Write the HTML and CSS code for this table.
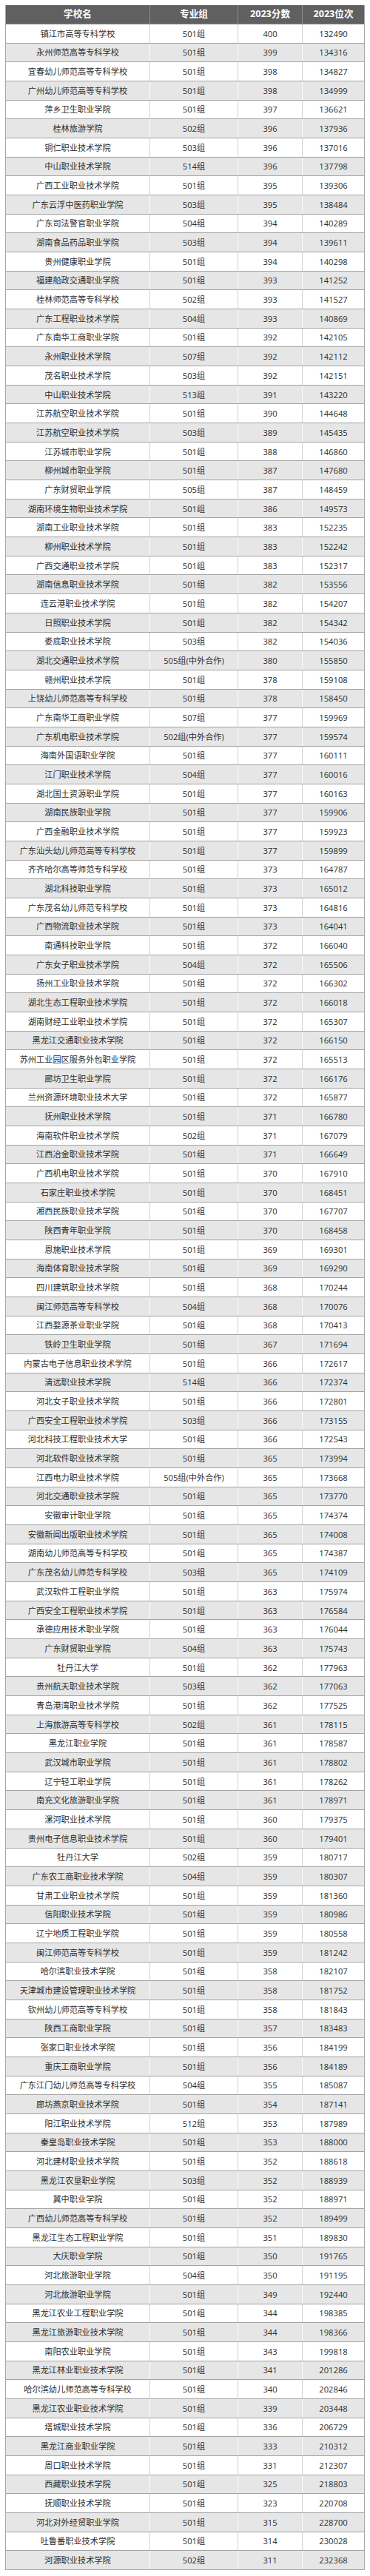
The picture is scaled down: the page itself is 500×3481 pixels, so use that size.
FILE: index.html
```html
<!DOCTYPE html>
<html lang="zh-CN">
<head>
<meta charset="utf-8">
<title>2023分数位次</title>
<link rel="stylesheet" href="styles.css">
</head>
<body>
<div class="table">
<div class="row head"><div class="cell">学校名</div><div class="cell">专业组</div><div class="cell">2023分数</div><div class="cell">2023位次</div></div>
<div class="row"><div class="cell">镇江市高等专科学校</div><div class="cell">501组</div><div class="cell">400</div><div class="cell">132490</div></div>
<div class="row"><div class="cell">永州师范高等专科学校</div><div class="cell">501组</div><div class="cell">399</div><div class="cell">134316</div></div>
<div class="row"><div class="cell">宜春幼儿师范高等专科学校</div><div class="cell">501组</div><div class="cell">398</div><div class="cell">134827</div></div>
<div class="row"><div class="cell">广州幼儿师范高等专科学校</div><div class="cell">501组</div><div class="cell">398</div><div class="cell">134999</div></div>
<div class="row"><div class="cell">萍乡卫生职业学院</div><div class="cell">501组</div><div class="cell">397</div><div class="cell">136621</div></div>
<div class="row"><div class="cell">桂林旅游学院</div><div class="cell">502组</div><div class="cell">396</div><div class="cell">137936</div></div>
<div class="row"><div class="cell">铜仁职业技术学院</div><div class="cell">503组</div><div class="cell">396</div><div class="cell">137016</div></div>
<div class="row"><div class="cell">中山职业技术学院</div><div class="cell">514组</div><div class="cell">396</div><div class="cell">137798</div></div>
<div class="row"><div class="cell">广西工业职业技术学院</div><div class="cell">501组</div><div class="cell">395</div><div class="cell">139306</div></div>
<div class="row"><div class="cell">广东云浮中医药职业学院</div><div class="cell">503组</div><div class="cell">395</div><div class="cell">138484</div></div>
<div class="row"><div class="cell">广东司法警官职业学院</div><div class="cell">504组</div><div class="cell">394</div><div class="cell">140289</div></div>
<div class="row"><div class="cell">湖南食品药品职业学院</div><div class="cell">503组</div><div class="cell">394</div><div class="cell">139611</div></div>
<div class="row"><div class="cell">贵州健康职业学院</div><div class="cell">501组</div><div class="cell">394</div><div class="cell">140298</div></div>
<div class="row"><div class="cell">福建船政交通职业学院</div><div class="cell">501组</div><div class="cell">393</div><div class="cell">141252</div></div>
<div class="row"><div class="cell">桂林师范高等专科学校</div><div class="cell">502组</div><div class="cell">393</div><div class="cell">141527</div></div>
<div class="row"><div class="cell">广东工程职业技术学院</div><div class="cell">504组</div><div class="cell">393</div><div class="cell">140869</div></div>
<div class="row"><div class="cell">广东南华工商职业学院</div><div class="cell">501组</div><div class="cell">392</div><div class="cell">142105</div></div>
<div class="row"><div class="cell">永州职业技术学院</div><div class="cell">507组</div><div class="cell">392</div><div class="cell">142112</div></div>
<div class="row"><div class="cell">茂名职业技术学院</div><div class="cell">503组</div><div class="cell">392</div><div class="cell">142151</div></div>
<div class="row"><div class="cell">中山职业技术学院</div><div class="cell">513组</div><div class="cell">391</div><div class="cell">143220</div></div>
<div class="row"><div class="cell">江苏航空职业技术学院</div><div class="cell">501组</div><div class="cell">390</div><div class="cell">144648</div></div>
<div class="row"><div class="cell">江苏航空职业技术学院</div><div class="cell">503组</div><div class="cell">389</div><div class="cell">145435</div></div>
<div class="row"><div class="cell">江苏城市职业学院</div><div class="cell">501组</div><div class="cell">388</div><div class="cell">146860</div></div>
<div class="row"><div class="cell">柳州城市职业学院</div><div class="cell">501组</div><div class="cell">387</div><div class="cell">147680</div></div>
<div class="row"><div class="cell">广东财贸职业学院</div><div class="cell">505组</div><div class="cell">387</div><div class="cell">148459</div></div>
<div class="row"><div class="cell">湖南环境生物职业技术学院</div><div class="cell">501组</div><div class="cell">386</div><div class="cell">149573</div></div>
<div class="row"><div class="cell">湖南工业职业技术学院</div><div class="cell">501组</div><div class="cell">383</div><div class="cell">152235</div></div>
<div class="row"><div class="cell">柳州职业技术学院</div><div class="cell">501组</div><div class="cell">383</div><div class="cell">152242</div></div>
<div class="row"><div class="cell">广西交通职业技术学院</div><div class="cell">501组</div><div class="cell">383</div><div class="cell">152317</div></div>
<div class="row"><div class="cell">湖南信息职业技术学院</div><div class="cell">501组</div><div class="cell">382</div><div class="cell">153556</div></div>
<div class="row"><div class="cell">连云港职业技术学院</div><div class="cell">501组</div><div class="cell">382</div><div class="cell">154207</div></div>
<div class="row"><div class="cell">日照职业技术学院</div><div class="cell">501组</div><div class="cell">382</div><div class="cell">154342</div></div>
<div class="row"><div class="cell">娄底职业技术学院</div><div class="cell">503组</div><div class="cell">382</div><div class="cell">154036</div></div>
<div class="row"><div class="cell">湖北交通职业技术学院</div><div class="cell">505组(中外合作)</div><div class="cell">380</div><div class="cell">155850</div></div>
<div class="row"><div class="cell">赣州职业技术学院</div><div class="cell">501组</div><div class="cell">378</div><div class="cell">159108</div></div>
<div class="row"><div class="cell">上饶幼儿师范高等专科学校</div><div class="cell">501组</div><div class="cell">378</div><div class="cell">158450</div></div>
<div class="row"><div class="cell">广东南华工商职业学院</div><div class="cell">507组</div><div class="cell">377</div><div class="cell">159969</div></div>
<div class="row"><div class="cell">广东机电职业技术学院</div><div class="cell">502组(中外合作)</div><div class="cell">377</div><div class="cell">159574</div></div>
<div class="row"><div class="cell">海南外国语职业学院</div><div class="cell">501组</div><div class="cell">377</div><div class="cell">160111</div></div>
<div class="row"><div class="cell">江门职业技术学院</div><div class="cell">504组</div><div class="cell">377</div><div class="cell">160016</div></div>
<div class="row"><div class="cell">湖北国土资源职业学院</div><div class="cell">501组</div><div class="cell">377</div><div class="cell">160163</div></div>
<div class="row"><div class="cell">湖南民族职业学院</div><div class="cell">501组</div><div class="cell">377</div><div class="cell">159906</div></div>
<div class="row"><div class="cell">广西金融职业技术学院</div><div class="cell">501组</div><div class="cell">377</div><div class="cell">159923</div></div>
<div class="row"><div class="cell">广东汕头幼儿师范高等专科学校</div><div class="cell">501组</div><div class="cell">377</div><div class="cell">159899</div></div>
<div class="row"><div class="cell">齐齐哈尔高等师范专科学校</div><div class="cell">501组</div><div class="cell">373</div><div class="cell">164787</div></div>
<div class="row"><div class="cell">湖北科技职业学院</div><div class="cell">501组</div><div class="cell">373</div><div class="cell">165012</div></div>
<div class="row"><div class="cell">广东茂名幼儿师范专科学校</div><div class="cell">501组</div><div class="cell">373</div><div class="cell">164816</div></div>
<div class="row"><div class="cell">广西物流职业技术学院</div><div class="cell">501组</div><div class="cell">373</div><div class="cell">164041</div></div>
<div class="row"><div class="cell">南通科技职业学院</div><div class="cell">501组</div><div class="cell">372</div><div class="cell">166040</div></div>
<div class="row"><div class="cell">广东女子职业技术学院</div><div class="cell">504组</div><div class="cell">372</div><div class="cell">165506</div></div>
<div class="row"><div class="cell">扬州工业职业技术学院</div><div class="cell">501组</div><div class="cell">372</div><div class="cell">166302</div></div>
<div class="row"><div class="cell">湖北生态工程职业技术学院</div><div class="cell">501组</div><div class="cell">372</div><div class="cell">166018</div></div>
<div class="row"><div class="cell">湖南财经工业职业技术学院</div><div class="cell">501组</div><div class="cell">372</div><div class="cell">165307</div></div>
<div class="row"><div class="cell">黑龙江交通职业技术学院</div><div class="cell">501组</div><div class="cell">372</div><div class="cell">166150</div></div>
<div class="row"><div class="cell">苏州工业园区服务外包职业学院</div><div class="cell">501组</div><div class="cell">372</div><div class="cell">165513</div></div>
<div class="row"><div class="cell">廊坊卫生职业学院</div><div class="cell">501组</div><div class="cell">372</div><div class="cell">166176</div></div>
<div class="row"><div class="cell">兰州资源环境职业技术大学</div><div class="cell">501组</div><div class="cell">372</div><div class="cell">165877</div></div>
<div class="row"><div class="cell">抚州职业技术学院</div><div class="cell">501组</div><div class="cell">371</div><div class="cell">166780</div></div>
<div class="row"><div class="cell">海南软件职业技术学院</div><div class="cell">502组</div><div class="cell">371</div><div class="cell">167079</div></div>
<div class="row"><div class="cell">江西冶金职业技术学院</div><div class="cell">501组</div><div class="cell">371</div><div class="cell">166649</div></div>
<div class="row"><div class="cell">广西机电职业技术学院</div><div class="cell">501组</div><div class="cell">370</div><div class="cell">167910</div></div>
<div class="row"><div class="cell">石家庄职业技术学院</div><div class="cell">501组</div><div class="cell">370</div><div class="cell">168451</div></div>
<div class="row"><div class="cell">湘西民族职业技术学院</div><div class="cell">501组</div><div class="cell">370</div><div class="cell">167707</div></div>
<div class="row"><div class="cell">陕西青年职业学院</div><div class="cell">501组</div><div class="cell">370</div><div class="cell">168458</div></div>
<div class="row"><div class="cell">恩施职业技术学院</div><div class="cell">501组</div><div class="cell">369</div><div class="cell">169301</div></div>
<div class="row"><div class="cell">海南体育职业技术学院</div><div class="cell">501组</div><div class="cell">369</div><div class="cell">169290</div></div>
<div class="row"><div class="cell">四川建筑职业技术学院</div><div class="cell">501组</div><div class="cell">368</div><div class="cell">170244</div></div>
<div class="row"><div class="cell">闽江师范高等专科学校</div><div class="cell">504组</div><div class="cell">368</div><div class="cell">170076</div></div>
<div class="row"><div class="cell">江西婺源茶业职业学院</div><div class="cell">501组</div><div class="cell">368</div><div class="cell">170413</div></div>
<div class="row"><div class="cell">铁岭卫生职业学院</div><div class="cell">501组</div><div class="cell">367</div><div class="cell">171694</div></div>
<div class="row"><div class="cell">内蒙古电子信息职业技术学院</div><div class="cell">501组</div><div class="cell">366</div><div class="cell">172617</div></div>
<div class="row"><div class="cell">清远职业技术学院</div><div class="cell">514组</div><div class="cell">366</div><div class="cell">172374</div></div>
<div class="row"><div class="cell">河北女子职业技术学院</div><div class="cell">501组</div><div class="cell">366</div><div class="cell">172801</div></div>
<div class="row"><div class="cell">广西安全工程职业技术学院</div><div class="cell">503组</div><div class="cell">366</div><div class="cell">173155</div></div>
<div class="row"><div class="cell">河北科技工程职业技术大学</div><div class="cell">501组</div><div class="cell">366</div><div class="cell">172543</div></div>
<div class="row"><div class="cell">河北软件职业技术学院</div><div class="cell">501组</div><div class="cell">365</div><div class="cell">173994</div></div>
<div class="row"><div class="cell">江西电力职业技术学院</div><div class="cell">505组(中外合作)</div><div class="cell">365</div><div class="cell">173668</div></div>
<div class="row"><div class="cell">河北交通职业技术学院</div><div class="cell">501组</div><div class="cell">365</div><div class="cell">173770</div></div>
<div class="row"><div class="cell">安徽审计职业学院</div><div class="cell">501组</div><div class="cell">365</div><div class="cell">174374</div></div>
<div class="row"><div class="cell">安徽新闻出版职业技术学院</div><div class="cell">501组</div><div class="cell">365</div><div class="cell">174008</div></div>
<div class="row"><div class="cell">湖南幼儿师范高等专科学校</div><div class="cell">501组</div><div class="cell">365</div><div class="cell">174387</div></div>
<div class="row"><div class="cell">广东茂名幼儿师范专科学校</div><div class="cell">503组</div><div class="cell">365</div><div class="cell">174109</div></div>
<div class="row"><div class="cell">武汉软件工程职业学院</div><div class="cell">501组</div><div class="cell">363</div><div class="cell">175974</div></div>
<div class="row"><div class="cell">广西安全工程职业技术学院</div><div class="cell">501组</div><div class="cell">363</div><div class="cell">176584</div></div>
<div class="row"><div class="cell">承德应用技术职业学院</div><div class="cell">501组</div><div class="cell">363</div><div class="cell">176044</div></div>
<div class="row"><div class="cell">广东财贸职业学院</div><div class="cell">504组</div><div class="cell">363</div><div class="cell">175743</div></div>
<div class="row"><div class="cell">牡丹江大学</div><div class="cell">501组</div><div class="cell">362</div><div class="cell">177963</div></div>
<div class="row"><div class="cell">贵州航天职业技术学院</div><div class="cell">503组</div><div class="cell">362</div><div class="cell">177063</div></div>
<div class="row"><div class="cell">青岛港湾职业技术学院</div><div class="cell">501组</div><div class="cell">362</div><div class="cell">177525</div></div>
<div class="row"><div class="cell">上海旅游高等专科学校</div><div class="cell">502组</div><div class="cell">361</div><div class="cell">178115</div></div>
<div class="row"><div class="cell">黑龙江职业学院</div><div class="cell">501组</div><div class="cell">361</div><div class="cell">178587</div></div>
<div class="row"><div class="cell">武汉城市职业学院</div><div class="cell">501组</div><div class="cell">361</div><div class="cell">178802</div></div>
<div class="row"><div class="cell">辽宁轻工职业学院</div><div class="cell">501组</div><div class="cell">361</div><div class="cell">178262</div></div>
<div class="row"><div class="cell">南充文化旅游职业学院</div><div class="cell">501组</div><div class="cell">361</div><div class="cell">178971</div></div>
<div class="row"><div class="cell">漯河职业技术学院</div><div class="cell">501组</div><div class="cell">360</div><div class="cell">179375</div></div>
<div class="row"><div class="cell">贵州电子信息职业技术学院</div><div class="cell">501组</div><div class="cell">360</div><div class="cell">179401</div></div>
<div class="row"><div class="cell">牡丹江大学</div><div class="cell">502组</div><div class="cell">359</div><div class="cell">180717</div></div>
<div class="row"><div class="cell">广东农工商职业技术学院</div><div class="cell">504组</div><div class="cell">359</div><div class="cell">180307</div></div>
<div class="row"><div class="cell">甘肃工业职业技术学院</div><div class="cell">501组</div><div class="cell">359</div><div class="cell">181360</div></div>
<div class="row"><div class="cell">信阳职业技术学院</div><div class="cell">501组</div><div class="cell">359</div><div class="cell">180986</div></div>
<div class="row"><div class="cell">辽宁地质工程职业学院</div><div class="cell">501组</div><div class="cell">359</div><div class="cell">180558</div></div>
<div class="row"><div class="cell">闽江师范高等专科学校</div><div class="cell">501组</div><div class="cell">359</div><div class="cell">181242</div></div>
<div class="row"><div class="cell">哈尔滨职业技术学院</div><div class="cell">501组</div><div class="cell">358</div><div class="cell">182107</div></div>
<div class="row"><div class="cell">天津城市建设管理职业技术学院</div><div class="cell">501组</div><div class="cell">358</div><div class="cell">181752</div></div>
<div class="row"><div class="cell">钦州幼儿师范高等专科学校</div><div class="cell">501组</div><div class="cell">358</div><div class="cell">181843</div></div>
<div class="row"><div class="cell">陕西工商职业学院</div><div class="cell">501组</div><div class="cell">357</div><div class="cell">183483</div></div>
<div class="row"><div class="cell">张家口职业技术学院</div><div class="cell">501组</div><div class="cell">356</div><div class="cell">184199</div></div>
<div class="row"><div class="cell">重庆工商职业学院</div><div class="cell">501组</div><div class="cell">356</div><div class="cell">184189</div></div>
<div class="row"><div class="cell">广东江门幼儿师范高等专科学校</div><div class="cell">504组</div><div class="cell">355</div><div class="cell">185087</div></div>
<div class="row"><div class="cell">廊坊燕京职业技术学院</div><div class="cell">501组</div><div class="cell">354</div><div class="cell">187141</div></div>
<div class="row"><div class="cell">阳江职业技术学院</div><div class="cell">512组</div><div class="cell">353</div><div class="cell">187989</div></div>
<div class="row"><div class="cell">秦皇岛职业技术学院</div><div class="cell">501组</div><div class="cell">353</div><div class="cell">188000</div></div>
<div class="row"><div class="cell">河北建材职业技术学院</div><div class="cell">501组</div><div class="cell">352</div><div class="cell">188618</div></div>
<div class="row"><div class="cell">黑龙江农垦职业学院</div><div class="cell">503组</div><div class="cell">352</div><div class="cell">188939</div></div>
<div class="row"><div class="cell">冀中职业学院</div><div class="cell">501组</div><div class="cell">352</div><div class="cell">188971</div></div>
<div class="row"><div class="cell">广西幼儿师范高等专科学校</div><div class="cell">501组</div><div class="cell">352</div><div class="cell">189499</div></div>
<div class="row"><div class="cell">黑龙江生态工程职业学院</div><div class="cell">501组</div><div class="cell">351</div><div class="cell">189830</div></div>
<div class="row"><div class="cell">大庆职业学院</div><div class="cell">501组</div><div class="cell">350</div><div class="cell">191765</div></div>
<div class="row"><div class="cell">河北旅游职业学院</div><div class="cell">504组</div><div class="cell">350</div><div class="cell">191195</div></div>
<div class="row"><div class="cell">河北旅游职业学院</div><div class="cell">501组</div><div class="cell">349</div><div class="cell">192440</div></div>
<div class="row"><div class="cell">黑龙江农业工程职业学院</div><div class="cell">501组</div><div class="cell">344</div><div class="cell">198385</div></div>
<div class="row"><div class="cell">黑龙江旅游职业技术学院</div><div class="cell">501组</div><div class="cell">344</div><div class="cell">198366</div></div>
<div class="row"><div class="cell">南阳农业职业学院</div><div class="cell">501组</div><div class="cell">343</div><div class="cell">199818</div></div>
<div class="row"><div class="cell">黑龙江林业职业技术学院</div><div class="cell">501组</div><div class="cell">341</div><div class="cell">201286</div></div>
<div class="row"><div class="cell">哈尔滨幼儿师范高等专科学校</div><div class="cell">501组</div><div class="cell">340</div><div class="cell">202846</div></div>
<div class="row"><div class="cell">黑龙江农业职业技术学院</div><div class="cell">501组</div><div class="cell">339</div><div class="cell">203448</div></div>
<div class="row"><div class="cell">塔城职业技术学院</div><div class="cell">501组</div><div class="cell">336</div><div class="cell">206729</div></div>
<div class="row"><div class="cell">黑龙江商业职业学院</div><div class="cell">501组</div><div class="cell">333</div><div class="cell">210312</div></div>
<div class="row"><div class="cell">周口职业技术学院</div><div class="cell">501组</div><div class="cell">331</div><div class="cell">212307</div></div>
<div class="row"><div class="cell">西藏职业技术学院</div><div class="cell">501组</div><div class="cell">325</div><div class="cell">218803</div></div>
<div class="row"><div class="cell">抚顺职业技术学院</div><div class="cell">501组</div><div class="cell">323</div><div class="cell">220708</div></div>
<div class="row"><div class="cell">河北对外经贸职业学院</div><div class="cell">501组</div><div class="cell">315</div><div class="cell">228700</div></div>
<div class="row"><div class="cell">吐鲁番职业技术学院</div><div class="cell">501组</div><div class="cell">314</div><div class="cell">230028</div></div>
<div class="row"><div class="cell">河源职业技术学院</div><div class="cell">502组</div><div class="cell">311</div><div class="cell">232368</div></div>
</div>
</body>
</html>
```

FILE: styles.css
```css
html, body {
  margin: 0;
  padding: 0;
  background: #ffffff;
}

body {
  padding: 7px 7px 0 7px;
  font-family: "Open Sans", "Noto Sans CJK SC", sans-serif;
  color: #2e2e2e;
}

.table {
  width: 486px;
  border-left: 1px solid #a8a8a8;
  border-right: 1px solid #a8a8a8;
  box-sizing: border-box;
}

.row {
  display: grid;
  grid-template-columns: 194px 119px 87px 1fr;
  height: 25.68px;
  box-sizing: border-box;
  border-bottom: 1px solid #a4a4a4;
  background: #ffffff;
}

.row:nth-child(odd) {
  background: #e6e6e6;
}

.row.head {
  height: 26px;
  background: #606060;
  border-bottom: 1px solid #8a8a8a;
}

.cell {
  display: flex;
  align-items: center;
  justify-content: center;
  font-size: 11.2px;
  line-height: 1;
  white-space: nowrap;
  overflow: hidden;
}

.cell + .cell {
  border-left: 1px solid #d2d2d2;
}

.row:nth-child(odd) .cell + .cell {
  border-left-color: #fbfbfb;
}

.row.head .cell {
  color: #ffffff;
  font-weight: 700;
  font-size: 12.6px;
}

.row.head .cell + .cell {
  border-left-color: #8c8c8c;
}
```
